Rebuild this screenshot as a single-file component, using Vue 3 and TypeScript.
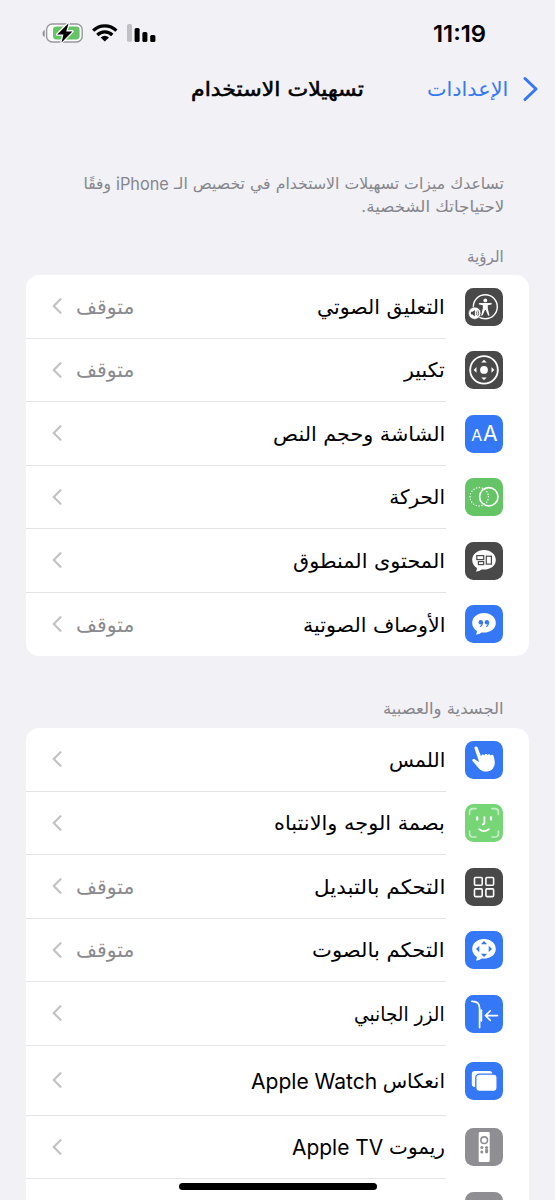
<script setup lang="ts">
import type { Directive } from 'vue'

interface Segment { text: string; width: number; latin?: boolean }
interface Item { icon: string; color: string; label: Segment[]; off?: boolean; tall?: boolean }
interface Section { title: Segment; items: Item[] }

const seg = (text: string, width: number, latin = false): Segment => ({ text, width, latin })

// Condenses or widens a run of text so that it fills its column exactly
const vFit: Directive<HTMLElement, number> = {
  mounted(el, { value }) {
    const natural = el.offsetWidth
    if (natural > 0) el.style.transform = `scaleX(${value / natural})`
  },
}

const intro: Segment[][] = [
  [seg('تساعدك ميزات تسهيلات الاستخدام في تخصيص الـ', 330), seg('iPhone', 53, true), seg('وفقًا', 27)],
  [seg('لاحتياجاتك الشخصية.', 143)],
]

const sections: Section[] = [
  {
    title: seg('الرؤية', 37),
    items: [
      { icon: 'voiceover', color: 'dark', label: [seg('التعليق الصوتي', 128)], off: true },
      { icon: 'zoom', color: 'dark', label: [seg('تكبير', 41)], off: true },
      { icon: 'text', color: 'blue', label: [seg('الشاشة وحجم النص', 172)] },
      { icon: 'motion', color: 'green', label: [seg('الحركة', 56)] },
      { icon: 'spoken', color: 'dark', label: [seg('المحتوى المنطوق', 152)] },
      { icon: 'quote', color: 'blue', label: [seg('الأوصاف الصوتية', 142)], off: true },
    ],
  },
  {
    title: seg('الجسدية والعصبية', 121),
    items: [
      { icon: 'touch', color: 'blue', label: [seg('اللمس', 56)] },
      { icon: 'face', color: 'lime', label: [seg('بصمة الوجه والانتباه', 171)] },
      { icon: 'switch', color: 'dark', label: [seg('التحكم بالتبديل', 131)], off: true },
      { icon: 'voice', color: 'blue', label: [seg('التحكم بالصوت', 133)], off: true },
      { icon: 'side', color: 'blue', label: [seg('الزر الجانبي', 91)] },
      { icon: 'mirror', color: 'blue', label: [seg('انعكاس', 62), seg('Apple Watch', 126, true)], tall: true },
      { icon: 'remote', color: 'gray', label: [seg('ريموت', 56), seg('Apple TV', 91, true)] },
      { icon: 'blank', color: 'gray', label: [] },
    ],
  },
]
</script>

<template>
  <div class="screen" dir="rtl">
    <header class="status">
      <span class="time"><span v-fit="53" class="run">11:19</span></span>
      <svg class="indicators" width="116" height="24" viewBox="0 0 116 24">
        <path d="M3.6 8.9C.9 9.9.9 14.9 3.6 15.9z" fill="#8f8f94" />
        <rect x="5.6" y="3" width="35.6" height="18" rx="5.6" fill="#fbfbfd" stroke="#98989d" stroke-width="1.4" />
        <rect x="12" y="5.6" width="26.6" height="12.9" rx="3.4" fill="#65c466" />
        <path d="M27.6 2.2 16.2 13.4h6.2L20.6 21.4 31.4 10.4h-6.2z" fill="#000" stroke="#fff" stroke-width="2.6" stroke-linejoin="round" paint-order="stroke" />
        <g fill="none" stroke="#000" stroke-width="3.3">
          <path d="M52.2 9.6A16.7 16.7 0 0 1 75.4 9.6" />
          <path d="M56.3 14A10.7 10.7 0 0 1 71.3 14" />
        </g>
        <path d="M59.6 16.5Q63.8 13.2 68 16.5L63.8 20.6z" />
        <rect x="86" y="3" width="4.9" height="17.7" rx="1.5" fill="#c0c0c5" />
        <rect x="93.6" y="6.9" width="5" height="14" rx="1.5" />
        <rect x="101.4" y="10.9" width="5" height="10" rx="1.5" />
        <rect x="109.2" y="13.9" width="5.2" height="7" rx="1.5" />
      </svg>
    </header>

    <nav class="nav">
      <div class="back">
        <svg width="16" height="26" viewBox="0 0 16 26"><path d="M2 2.5 13 13 2 23.5" fill="none" stroke="#3478f6" stroke-width="3" stroke-linecap="round" stroke-linejoin="round" /></svg>
        <span class="back-text"><span v-fit="81" class="run">الإعدادات</span></span>
      </div>
      <h1 class="title"><span v-fit="173" class="run">تسهيلات الاستخدام</span></h1>
    </nav>

    <div class="intro">
      <p v-for="(line, i) in intro" :key="i" class="line">
        <span v-for="s in line" :key="s.text" class="box" :class="{ latin: s.latin }" :style="{ width: s.width + 'px' }"><span v-fit="s.width" class="run">{{ s.text }}</span></span>
      </p>
    </div>

    <section v-for="section in sections" :key="section.title.text" class="section">
      <h2 class="heading"><span class="box" :style="{ width: section.title.width + 'px' }"><span v-fit="section.title.width" class="run">{{ section.title.text }}</span></span></h2>
      <ul class="card">
        <li v-for="item in section.items" :key="item.icon" class="row" :class="{ tall: item.tall }">
          <svg class="icon" :class="item.color" viewBox="0 0 38 38" fill="#fff">
            <g v-if="item.icon === 'voiceover'">
              <circle cx="20.3" cy="18.8" r="12" fill="none" stroke="#fff" stroke-width="1.4" />
              <circle cx="20.3" cy="12.4" r="1.9" />
              <path d="M14.2 15.1 26.4 15.1Q27.2 16.1 26.4 16.5L22.8 17.2V20.5L24.5 27.2Q23.7 28.2 23 27.3L20.7 22H20L17.6 27.3Q16.8 28.2 16.1 27.2L17.8 20.5V17.2L14.2 16.5Q13.5 15.8 14.2 15.1z" />
              <circle cx="9.7" cy="25.2" r="6.2" stroke="#49494a" stroke-width=".7" />
              <path d="M5.9 23.8h1.7l2.3-1.9v6.6l-2.3-1.9H5.9z" fill="#49494a" />
              <path d="M11.3 23.5q1.1 1.7 0 3.4M12.8 22.4q2 2.8 0 5.6" fill="none" stroke="#49494a" stroke-width=".8" />
            </g>
            <g v-else-if="item.icon === 'zoom'">
              <circle cx="19" cy="18.9" r="13.8" fill="none" stroke="#fff" stroke-width="1.8" />
              <circle cx="19" cy="18.9" r="3.9" />
              <path d="M16.2 11.4h5.6L19 8.8zM16.2 26.4h5.6L19 29zM11.5 16.1v5.6L8.7 18.9zM26.5 16.1v5.6L29.3 18.9z" />
            </g>
            <g v-else-if="item.icon === 'text'" class="letters">
              <text x="6.3" y="26.4" font-size="15.8" textLength="11" lengthAdjust="spacingAndGlyphs">A</text>
              <text x="17.9" y="26.4" font-size="21.6" textLength="14.6" lengthAdjust="spacingAndGlyphs">A</text>
            </g>
            <g v-else-if="item.icon === 'motion'" fill="none" stroke="#fff">
              <circle cx="14.2" cy="18.8" r="9.2" stroke-width="1.5" stroke-dasharray="0 2.89" stroke-linecap="round" />
              <circle cx="23.8" cy="18.8" r="9.2" stroke-width="1.6" />
            </g>
            <g v-else-if="item.icon === 'spoken'">
              <path d="M19 8C12.2 8 7.2 12.4 7.2 18c0 3.5 1.9 6.2 4.7 7.9.2 1.5-.5 2.7-1.1 3.5 2 .2 4.2-.8 5.8-2 7.8 1 14.2-3 14.2-9.4C30.8 12.4 25.8 8 19 8z" />
              <g fill="none" stroke="#49494a" stroke-width="1.2"><rect x="11.8" y="13.6" width="6.9" height="4" /><rect x="13.4" y="19.6" width="5.3" height="3" /><rect x="21.3" y="14.2" width="5.1" height="7.9" /></g>
            </g>
            <g v-else-if="item.icon === 'quote'">
              <path d="M19 8C12.2 8 7.2 12.4 7.2 18c0 3.5 1.9 6.2 4.7 7.9.2 1.5-.5 2.7-1.1 3.5 2 .2 4.2-.8 5.8-2 7.8 1 14.2-3 14.2-9.4C30.8 12.4 25.8 8 19 8z" />
              <g fill="#3478f6"><circle cx="15.8" cy="17.3" r="2.2" /><circle cx="21.9" cy="17.3" r="2.2" /><path d="M18 17.2c.2 2.5-.9 4.2-2.9 4.8l-.3-.9c1-.4 1.6-1.1 1.7-2zM24.1 17.2c.2 2.5-.9 4.2-2.9 4.8l-.3-.9c1-.4 1.6-1.1 1.7-2z" /></g>
            </g>
            <path v-else-if="item.icon === 'touch'" d="M9.5 7.2C9 5.7 11.7 4.7 12.5 6.3L16.2 15.8C15.9 13.4 18.7 12.8 19.3 14.8 19.3 12.6 22.3 12.3 22.8 14.5 23 12.6 25.4 12.8 25.9 14.8 26.3 13.4 28.2 13.6 28.6 15.2 29.8 19.5 30.3 22.3 29.1 25.2 27.2 29.8 23 31.2 19 30.4 14.8 29.5 13.2 26.6 11.2 24.3L7.5 20C6.5 18.5 8.6 17.4 10 18.4L14.1 21z" />
            <g v-else-if="item.icon === 'face'" fill="none" stroke="#fff" stroke-linecap="round">
              <path d="M4.6 10.6V8.2Q4.6 4.6 8.2 4.6h2.9M26.9 4.6h2.9q3.6 0 3.6 3.6v2.4M33.4 27v2.4q0 3.6-3.6 3.6h-2.9M11.1 33H8.2q-3.6 0-3.6-3.6V27" stroke="#c8eec9" stroke-width="1.6" />
              <path d="M12.2 13.5v2M26 13.5v2" stroke-width="2.3" /><path d="M19.4 13.1v5.8q0 1.5-1.7 1.5" stroke-width="1.7" /><path d="M14.2 25.3q4.8 3.6 9.6 0" stroke-width="1.9" />
            </g>
            <g v-else-if="item.icon === 'switch'" fill="none" stroke="#fff" stroke-width="1.6"><rect x="9.5" y="9.5" width="7.7" height="7.7" rx="1" /><rect x="20.9" y="9.5" width="7.7" height="7.7" rx="1" /><rect x="9.5" y="20.9" width="7.7" height="7.7" rx="1" /><rect x="20.9" y="20.9" width="7.7" height="7.7" rx="1" /></g>
            <g v-else-if="item.icon === 'voice'">
              <path d="M19 8C12.2 8 7.2 12.4 7.2 18c0 3.5 1.9 6.2 4.7 7.9.2 1.5-.5 2.7-1.1 3.5 2 .2 4.2-.8 5.8-2 7.8 1 14.2-3 14.2-9.4C30.8 12.4 25.8 8 19 8z" />
              <path d="M15.8 13.3h6.4L19 10zM15.8 22.7h6.4L19 26zM14.3 14.8v6.4L11 18zM23.7 14.8v6.4L27 18z" fill="#3478f6" />
            </g>
            <g v-else-if="item.icon === 'side'" fill="none" stroke="#fff" stroke-linecap="round">
              <path d="M6.8 6.3C12.6 6 14.6 9 14.6 13.5V32.6" stroke-width="1.7" /><path d="M16.2 15.3V25.7" stroke-width="2" /><path d="M32.5 20.6H20.8M25.3 15.8 20.5 20.6 25.3 25.4" stroke-width="1.6" />
            </g>
            <g v-else-if="item.icon === 'mirror'"><rect x="6.8" y="9" width="20.5" height="16" rx="3" /><rect x="10.8" y="12.2" width="21.3" height="17.1" rx="3.5" stroke="#3478f6" stroke-width="1.3" /></g>
            <g v-else-if="item.icon === 'remote'"><rect x="13.7" y="4" width="11" height="30" rx="1.2" /><circle cx="19.2" cy="12.2" r="3.3" fill="none" stroke="#8e8e93" stroke-width="1.6" /><g fill="#8e8e93"><circle cx="16.8" cy="19.6" r="1.5" /><circle cx="21.6" cy="19.6" r="1.5" /><circle cx="16.8" cy="24" r="1.5" /><rect x="20.1" y="20.8" width="3" height="4.7" rx="1.4" /></g></g>
          </svg>
          <div class="content">
            <div class="label"><span v-for="s in item.label" :key="s.text" class="box" :class="{ latin: s.latin }" :style="{ width: s.width + 'px' }"><span v-fit="s.width" class="run">{{ s.text }}</span></span></div>
            <div v-if="item.off" class="value"><span v-fit="58" class="run">متوقف</span></div>
            <svg v-if="item.label.length" class="chevron" width="10" height="18" viewBox="0 0 10 18"><path d="M8.5 2.2 1.7 9l6.8 6.8" fill="none" stroke="#c2c2c4" stroke-width="2.2" stroke-linecap="round" stroke-linejoin="round" /></svg>
          </div>
        </li>
      </ul>
    </section>
    <div class="home"></div>
  </div>
</template>

<style>
html, body { margin: 0; background: #f1f1f6; }
</style>

<style scoped>
.screen { position: relative; width: 555px; height: 1200px; overflow: hidden; background: #f1f1f6; color: #000; font-family: "DejaVu Sans", sans-serif; }
.status { height: 60px; padding: 0 69px 0 41px; box-sizing: border-box; display: flex; justify-content: space-between; align-items: flex-start; }
.time { width: 53px; margin-top: 20px; font: 600 22.5px/27px Inter, sans-serif; }
.indicators { margin-top: 21px; }
.run { display: inline-block; white-space: nowrap; transform-origin: right center; }
.box { display: inline-block; flex: none; }
.nav { height: 58px; display: flex; align-items: center; padding-right: 16px; }
.back { display: flex; align-items: center; gap: 15px; color: #3478f6; font-size: 20px; line-height: 30px; }
.back-text { width: 81px; }
.title { width: 173px; margin: 0 63px 0 0; font-size: 20px; line-height: 30px; font-weight: 400; -webkit-text-stroke: .55px #000; }
.intro { height: 76px; padding: 55px 51px 0 0; box-sizing: content-box; color: #85858b; font-size: 15.5px; }
.line { display: flex; gap: 5px; margin: 0; height: 23px; line-height: 23px; }
.latin { font-family: Inter, sans-serif; font-size: 1.07em; }
.section { padding: 0 26px; }
.section + .section { margin-top: 40px; }
.heading { margin: 0; height: 32px; padding-right: 25px; box-sizing: border-box; font-size: 15.5px; line-height: 27px; font-weight: 400; color: #85858b; }
.intro + .section .heading { height: 26px; line-height: 16px; }
.card { list-style: none; margin: 0; padding: 0; background: #fff; border-radius: 13px; }
.row { height: 63.5px; display: flex; align-items: center; padding-right: 26px; }
.row.tall { height: 70px; }
.icon { width: 38px; height: 38px; flex: none; border-radius: 8.5px; }
.dark { background: #49494a; }
.blue { background: #3478f6; }
.green { background: #65c466; }
.lime { background: #76d575; }
.gray { background: #8e8e93; }
.letters { font-family: Inter, sans-serif; direction: ltr; }
.content { flex: 1; height: 100%; margin-right: 19px; padding: 0 0 0 26px; box-sizing: border-box; display: flex; align-items: center; border-bottom: 1px solid #e4e4e7; }
.row:last-child .content { border-bottom: 0; }
.label { flex: 1; display: flex; gap: 6px; padding: 1px 1px 0 0; font-size: 20px; line-height: 30px; }
.value { width: 58px; padding-top: 1px; color: #8a8a8e; font-size: 20px; line-height: 30px; }
.chevron { margin-right: 14px; flex: none; }
.value + .chevron { margin-right: 14px; }
.home { position: absolute; left: 179px; top: 1183px; width: 198px; height: 7px; border-radius: 4px; background: #000; }
</style>
